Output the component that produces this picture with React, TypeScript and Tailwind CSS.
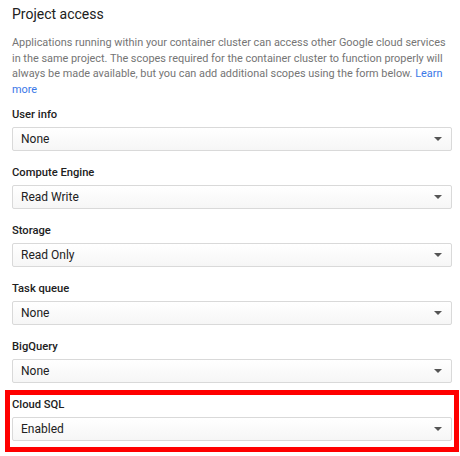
import React from "react";

const fields = [
  { label: "User info", value: "None" },
  { label: "Compute Engine", value: "Read Write" },
  { label: "Storage", value: "Read Only" },
  { label: "Task queue", value: "None" },
  { label: "BigQuery", value: "None" },
];

function Select({ value }: { value: string }) {
  return (
    <div className="flex h-[24px] items-center justify-between rounded-[2px] border border-[#d9d9d9] bg-gradient-to-b from-[#ffffff] to-[#f6f6f6] pl-[8px] pr-[9px]">
      <span className="text-[12px] text-[#212121]">{value}</span>
      <svg width="8" height="4" viewBox="0 0 8 4" className="block">
        <path d="M0 0 L8 0 L4 4 Z" fill="#555555" />
      </svg>
    </div>
  );
}

function Field({ label, value }: { label: string; value: string }) {
  return (
    <div className="flex flex-col gap-[4px]">
      <div className="text-[11.2px] font-medium leading-[16px] text-[#212121]">{label}</div>
      <Select value={value} />
    </div>
  );
}

export default function App() {
  return (
    <div
      className="relative h-[456px] w-[460px] overflow-hidden bg-white pl-[12px] pr-[8px] pt-[4px]"
      style={{ fontFamily: "Roboto, 'Liberation Sans', sans-serif" }}
    >
      <h2 className="text-[14px] font-normal leading-[20px] text-[#212121]">Project access</h2>
      <p className="mt-[11px] text-[10.9px] leading-[15.7px] text-[#757575]">
        Applications running within your container cluster can access other Google cloud services in the same
        project. The scopes required for the container cluster to function properly will always be made available,
        but you can add additional scopes using the form below.{" "}
        <a className="text-[#3b78e7]">Learn more</a>
      </p>
      <div className="mt-[9px] flex flex-col gap-[14px]">
        {fields.map((f) => (
          <Field key={f.label} label={f.label} value={f.value} />
        ))}
        <div className="-mx-[7px] -my-[7px] border-[5px] border-[#ff0000] px-[2px] pb-[6px] pt-[2px]">
          <Field label="Cloud SQL" value="Enabled" />
        </div>
      </div>
    </div>
  );
}
